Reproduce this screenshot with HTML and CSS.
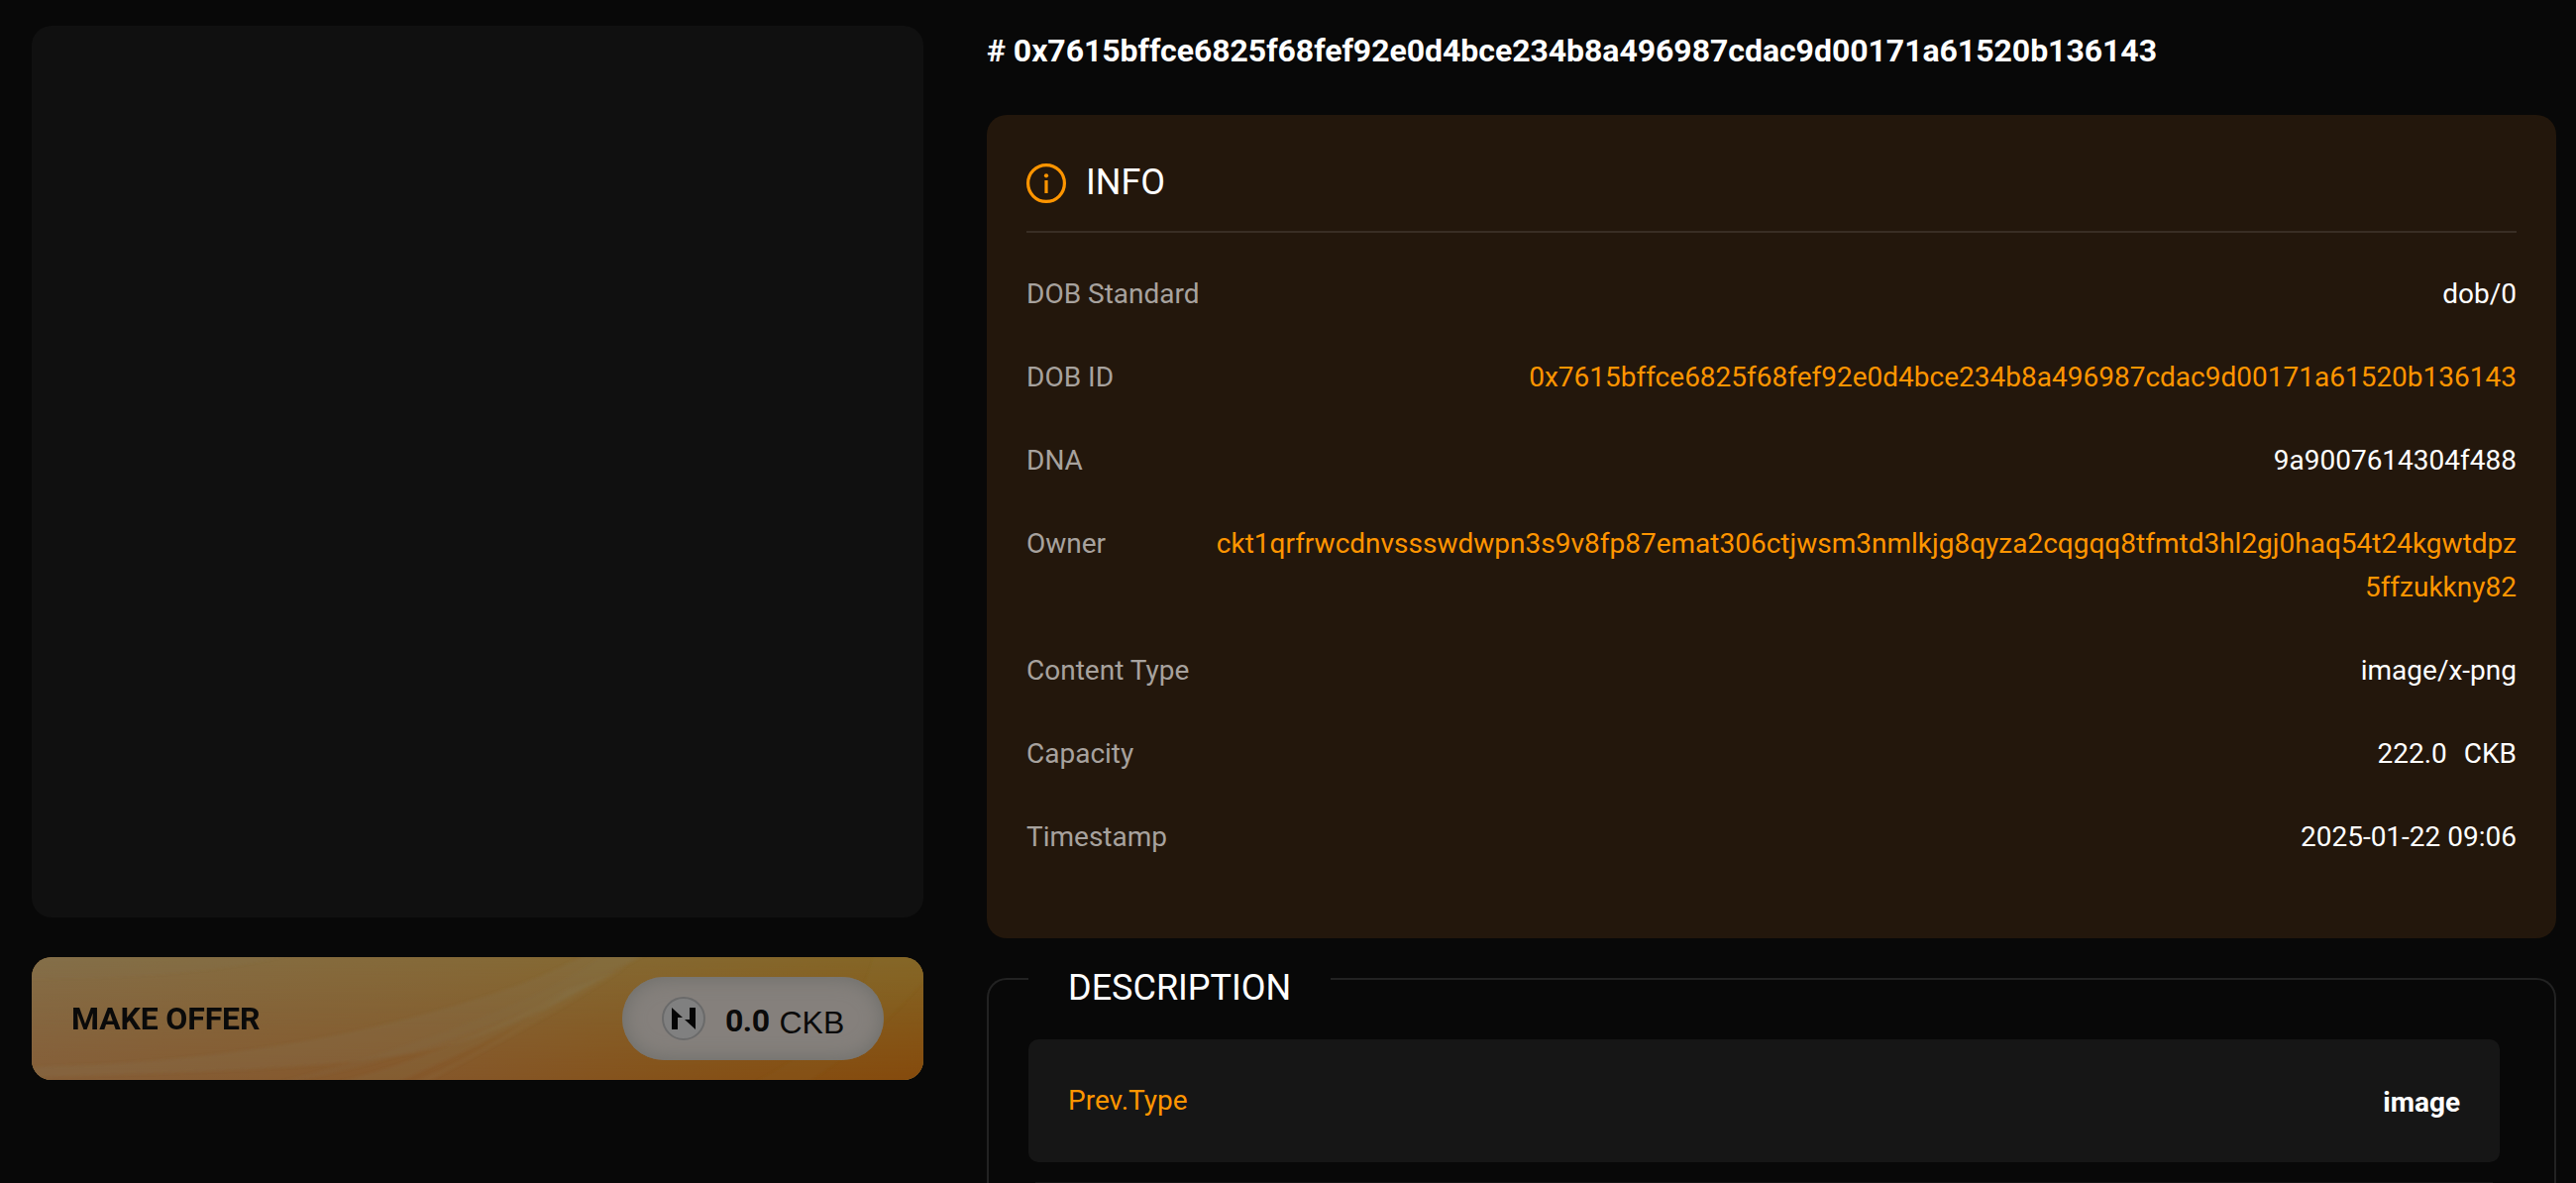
FILE: index.html
```html
<!DOCTYPE html>
<html lang="en">
<head>
<meta charset="utf-8">
<title>DOB detail</title>
<link rel="stylesheet" href="styles.css">
</head>
<body>
<main class="page">
  <aside class="side">
    <div class="preview"></div>
    <button class="offer" type="button">
      <svg class="offer-art" viewBox="0 0 900 124" preserveAspectRatio="none" aria-hidden="true">
        <defs>
          <linearGradient id="across" x1="0" x2="1" y1="0" y2="0"><stop offset="0" stop-color="#856e47"/><stop offset=".5" stop-color="#856a38"/><stop offset="1" stop-color="#856625"/></linearGradient>
          <linearGradient id="low" x1="0" x2="1" y1="0" y2="0"><stop offset="0" stop-color="#855e38"/><stop offset=".45" stop-color="#85572a"/><stop offset=".7" stop-color="#85521a"/><stop offset="1" stop-color="#854a0c"/></linearGradient>
          <linearGradient id="fade" x1="0" x2="0" y1="0" y2="1"><stop offset="0" stop-color="#000"/><stop offset="1" stop-color="#fff"/></linearGradient>
          <mask id="down"><rect width="900" height="124" fill="url(#fade)"/></mask>
          <filter id="soft" x="-10%" y="-10%" width="120%" height="120%"><feGaussianBlur stdDeviation="1.6"/></filter>
        </defs>
        <rect width="900" height="124" fill="url(#across)"/>
        <rect width="900" height="124" fill="url(#low)" mask="url(#down)"/>
        <g filter="url(#soft)">
          <path d="M-10 22C110 22 200 14 270 -4H-10Z" fill="#858060" opacity=".08"/>
          <path d="M-10 111C190 108 340 78 468 36C510 22 530 12 563 -4H622C560 30 520 56 440 84C340 114 200 114 -10 122Z" fill="#85785c" opacity=".18"/>
          <path d="M260 126C400 100 490 60 622 -4H580C520 40 400 88 250 126Z" fill="#858060" opacity=".08"/>
          <path d="M370 126C420 104 500 66 590 14L540 32C480 66 400 104 310 126Z" fill="#858060" opacity=".12"/>
          <path d="M400 126C450 98 530 58 600 10L540 34C480 80 440 104 385 126Z" fill="#858060" opacity=".1"/>
          <path d="M785 126C830 96 870 60 904 20V-4H850C840 50 790 96 730 126Z" fill="#858040" opacity=".05"/>
        </g>
      </svg>
      <span class="offer-label">MAKE OFFER</span>
      <span class="pill">
        <svg class="coin" viewBox="0 0 44 44" aria-hidden="true"><circle cx="22" cy="22" r="21" fill="#808080" stroke="#6a6a6a" stroke-width="2"/><path d="M10 11L21 21H16V33H10ZM28 11H34V33L23 23H28Z" fill="#050505"/></svg>
        <span class="amount">0.0</span><span class="unit">CKB</span>
      </span>
    </button>
  </aside>
  <section class="detail">
    <h1 class="title"># 0x7615bffce6825f68fef92e0d4bce234b8a496987cdac9d00171a61520b136143</h1>
    <section class="info">
      <h2 class="info-head">
        <svg class="info-icon" viewBox="0 0 40 40" aria-hidden="true"><circle cx="20" cy="20" r="18.4" fill="none" stroke="#ff9500" stroke-width="3.2"/><circle cx="20" cy="12.3" r="2.1" fill="#ff9500"/><path d="M20 17V30" stroke="#ff9500" stroke-width="3.2"/></svg>
        INFO
      </h2>
      <dl class="rows">
        <div class="row"><dt>DOB Standard</dt><dd>dob/0</dd></div>
        <div class="row"><dt>DOB ID</dt><dd class="link">0x7615bffce6825f68fef92e0d4bce234b8a496987cdac9d00171a61520b136143</dd></div>
        <div class="row"><dt>DNA</dt><dd>9a9007614304f488</dd></div>
        <div class="row"><dt>Owner</dt><dd class="link">ckt1qrfrwcdnvssswdwpn3s9v8fp87emat306ctjwsm3nmlkjg8qyza2cqgqq8tfmtd3hl2gj0haq54t24kgwtdpz<br>5ffzukkny82</dd></div>
        <div class="row"><dt>Content Type</dt><dd>image/x-png</dd></div>
        <div class="row"><dt>Capacity</dt><dd class="capacity"><span>222.0</span><span>CKB</span></dd></div>
        <div class="row"><dt>Timestamp</dt><dd>2025-01-22 09:06</dd></div>
      </dl>
    </section>
    <section class="description">
      <h2 class="legend">DESCRIPTION</h2>
      <div class="traits">
        <div class="trait"><span class="trait-name">Prev.Type</span><span class="trait-value">image</span></div>
        <div class="trait trait-next"></div>
      </div>
    </section>
  </section>
</main>
</body>
</html>
```
FILE: styles.css
```css
* { box-sizing: border-box; }
body {
  margin: 0;
  background: #080808;
  color: #fff;
  font-family: Roboto, "Liberation Sans", sans-serif;
  font-size: 28px;
  line-height: 44px;
}
h1, h2, dl, dd { margin: 0; font-weight: 400; }
.page {
  display: grid;
  grid-template-columns: 900px 1584px;
  column-gap: 64px;
  height: 1194px;
  padding: 26px 20px 0 32px;
}
.side { display: flex; flex-direction: column; gap: 40px; }
.preview { height: 900px; border-radius: 20px; background: #101010; }
.offer {
  position: relative;
  display: flex;
  align-items: center;
  justify-content: space-between;
  height: 124px;
  padding: 0 40px;
  border: 0;
  border-radius: 20px;
  overflow: hidden;
  background: #85602c;
  color: #0a0a0a;
  font: 700 32px/44px Roboto, sans-serif;
}
.offer-art { position: absolute; inset: 0; width: 100%; height: 100%; }
.offer-label { position: relative; padding-bottom: 1px; letter-spacing: -0.15px; }
.pill {
  position: relative;
  display: flex;
  align-items: center;
  width: 264px;
  height: 84px;
  padding-left: 40px;
  border-radius: 42px;
  background: #85807c;
  box-shadow: inset 0 0 20px #6c6c68;
}
.coin { width: 44px; height: 44px; margin-right: 20px; }
.amount { padding-top: 3px; letter-spacing: -0.5px; }
.unit {
  margin-left: 10px;
  padding-top: 7px;
  font: 400 32px/44px "Liberation Sans", Arial, sans-serif;
}
.title {
  height: 90px;
  font-size: 32px;
  line-height: 50px;
  font-weight: 700;
  letter-spacing: -0.045px;
  white-space: nowrap;
}
.info { height: 831px; padding: 40px; border-radius: 20px; background: #23170c; }
.info-head {
  display: flex;
  align-items: center;
  gap: 20px;
  height: 79px;
  padding-bottom: 21px;
  border-bottom: 2px solid #392e24;
  font-size: 36px;
}
.info-icon { width: 40px; height: 40px; margin-top: 2px; }
.rows { display: flex; flex-direction: column; gap: 40px; padding-top: 40px; }
.row { display: flex; justify-content: space-between; }
.row dt { color: #a7a29e; }
.row dd { text-align: right; }
.row .link, .trait-name { color: #ff9500; }
.capacity { display: flex; gap: 17px; }
.description {
  height: 207px;
  margin-top: 40px;
  padding: 0 55px 0 40px;
  border: 2px solid #222;
  border-bottom: 0;
  border-radius: 20px 20px 0 0;
}
.legend {
  width: 305px;
  height: 44px;
  margin-top: -14px;
  padding-left: 40px;
  background: #080808;
  font-size: 36px;
}
.traits { display: flex; flex-direction: column; gap: 20px; padding-top: 30px; }
.trait {
  display: flex;
  align-items: center;
  justify-content: space-between;
  height: 124px;
  padding: 0 40px;
  border-radius: 10px;
  background: #161616;
}
.trait-next { height: 1px; margin: 0 7px; border-radius: 0; }
.trait-value { padding-top: 3px; font-weight: 700; }
```
